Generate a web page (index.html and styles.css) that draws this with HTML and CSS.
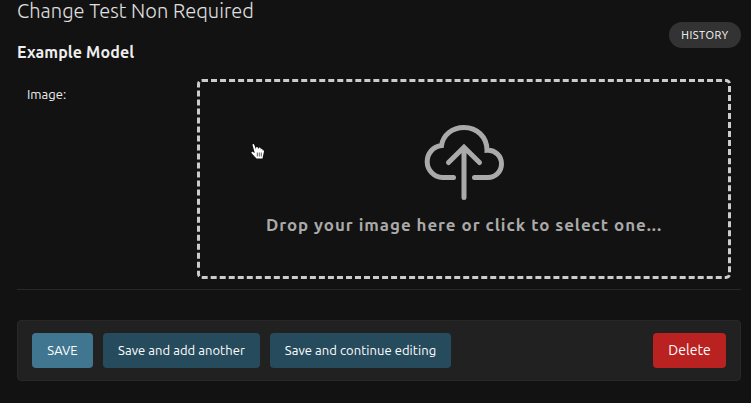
FILE: index.html
```html
<!DOCTYPE html>
<html lang="en">
<head>
<meta charset="utf-8">
<title>Change Test Non Required</title>
<link rel="stylesheet" href="styles.css">
</head>
<body>
<main class="content">
  <header class="heading">
    <div>
      <h1>Change Test Non Required</h1>
      <h2>Example Model</h2>
    </div>
    <a class="history">HISTORY</a>
  </header>
  <section class="form-row">
    <label class="label">Image:</label>
    <div class="dropzone">
      <svg class="upload" width="82" height="78" viewBox="423 124 82 78" aria-hidden="true">
        <path d="M453.500 177.500H442.500A16 16 0 0 1 441.500 145.600C443 135 452 127.500 464 127.500C477 127.500 487 137 487 150.200C495 149.600 501.500 156 501.500 163.700C501.500 171.500 495.500 177.500 488 177.500H474.500M464 197.500V147.500M448.500 162.500L464 147.200L479.500 162.500"/>
      </svg>
      <p class="prompt">Drop your image here or click to select one...</p>
    </div>
  </section>
  <footer class="submit-row">
    <button class="button save">SAVE</button>
    <button class="button another">Save and add another</button>
    <button class="button continue">Save and continue editing</button>
    <button class="button delete">Delete</button>
  </footer>
</main>
<svg class="cursor" width="15" height="17" viewBox="0 0 15 17" aria-hidden="true">
  <path d="M2.500 2C2.500.8 3.900.8 4.200 1.800L6 6.500V4.500Q7 3.500 8 4.800V6L9 4.800Q10.200 4.200 10.700 5.500V6.500Q12 5 12.500 6.500V7.500Q14 6.500 14 8.500L13.200 12 12.500 15.500H6.500L1.700 10.300C1 9.200 2 8.500 2.900 9L4.800 10Z"/>
  <path class="fingers" d="M7.300 9.500V13.500M9.300 9.500V13.500M11.300 9.500V13.500"/>
</svg>
</body>
</html>
```
FILE: styles.css
```css
* { box-sizing: border-box; }
body {
  margin: 0;
  height: 403px;
  overflow: hidden;
  background: #121212;
  color: #eee;
  font-family: Ubuntu, "Noto Sans", "Open Sans", sans-serif;
  font-size: 13px;
}
.content { padding: 0 10px 0 17px; }
.heading {
  display: flex;
  justify-content: space-between;
  height: 69px;
  white-space: nowrap;
}
h1, h2 { margin: 0; }
h1 { height: 40px; line-height: 22px; font-size: 20px; font-weight: 300; letter-spacing: 0.04px; color: #e0e0e0; }
h2 { line-height: 24px; font-size: 16px; font-weight: 700; letter-spacing: 0.12px; }
.history {
  width: 72px;
  height: 26px;
  margin-top: 22px;
  border-radius: 13px;
  background: #333;
  color: #fff;
  text-align: center;
  font-size: 11px;
  line-height: 26px;
  letter-spacing: 0.5px;
}
.form-row {
  display: flex;
  height: 221px;
  padding: 10px;
  border-bottom: 1px solid #282828;
}
.label { width: 170px; line-height: 31px; }
.dropzone {
  display: flex;
  flex-direction: column;
  align-items: center;
  width: 534px;
  height: 200px;
  padding-top: 42px;
  border: 3px dashed #ccc;
  border-radius: 5px;
}
.upload {
  flex: none;
  fill: none;
  stroke: #aaa;
  stroke-width: 5;
  stroke-linecap: round;
}
.prompt {
  margin: 12px 0 0;
  color: #aaa;
  font-size: 16.9px;
  font-weight: 700;
  line-height: 22px;
  letter-spacing: 0.96px;
  white-space: nowrap;
}
.submit-row {
  display: flex;
  gap: 10px;
  height: 61px;
  margin-top: 30px;
  padding: 12px 14px;
  border: 1px solid #282828;
  border-radius: 4px;
  background: #212121;
}
.button {
  height: 35px;
  padding: 0;
  border: 0;
  border-radius: 4px;
  background: #264b5d;
  color: #fff;
  font: inherit;
  line-height: 35px;
  letter-spacing: 0.05px;
  white-space: nowrap;
}
.save { width: 61px; background: #417690; }
.another { width: 157px; }
.continue { width: 181px; }
.delete { width: 73px; margin-left: auto; background: #ba2121; font-size: 14px; }
.cursor { position: absolute; left: 250px; top: 143px; fill: #fff; }
.fingers { stroke: #333; stroke-width: .8; }
```
